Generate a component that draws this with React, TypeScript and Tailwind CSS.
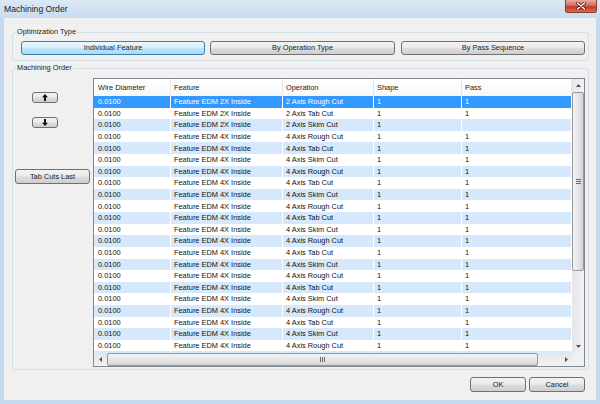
const btn =
  "flex items-center justify-center rounded-[3px] border border-[#707070] bg-[linear-gradient(#f2f2f2,#ebebeb_45%,#dddddd_55%,#cfcfcf)] text-[#1b1b1b] leading-none";
const btnHot =
  "flex items-center justify-center rounded-[3px] border border-[#3c7fb1] bg-[linear-gradient(#eaf6fd,#d9f0fc_45%,#bee6fd_55%,#a7d9f5)] text-[#1b1b1b] leading-none";

const cols = [
  { title: 'Wire Diameter', cls: 'w-[77px] pl-[4px]' },
  { title: 'Feature', cls: 'w-[112px] pl-[3px]' },
  { title: 'Operation', cls: 'w-[91px] pl-[3px]' },
  { title: 'Shape', cls: 'w-[88px] pl-[3px]' },
  { title: 'Pass', cls: 'flex-1 pl-[3px]' },
];

const ops = ['4 Axis Rough Cut', '4 Axis Tab Cut', '4 Axis Skim Cut'];

const rows: string[][] = [
  ['0.0100', 'Feature EDM 2X Inside', '2 Axis Rough Cut', '1', '1'],
  ['0.0100', 'Feature EDM 2X Inside', '2 Axis Tab Cut', '1', '1'],
  ['0.0100', 'Feature EDM 2X Inside', '2 Axis Skim Cut', '1', ''],
  ...Array.from({ length: 20 }, (_, i) => ['0.0100', 'Feature EDM 4X Inside', ops[i % 3], '1', '1']),
];

function Arrow({ down }: { down?: boolean }) {
  return (
    <svg width="6" height="7" viewBox="0 0 6 7" className={down ? 'rotate-180' : ''}>
      <path d="M3 0 L6 3.2 H4 V7 H2 V3.2 H0 Z" fill="#111" />
    </svg>
  );
}

function Tri({ dir }: { dir: 'up' | 'down' | 'left' | 'right' }) {
  const d = {
    up: 'M0 3 L2.5 0 L5 3 Z',
    down: 'M0 0 L5 0 L2.5 3 Z',
    left: 'M3 0 L3 5 L0 2.5 Z',
    right: 'M0 0 L3 2.5 L0 5 Z',
  }[dir];
  const vert = dir === 'up' || dir === 'down';
  return (
    <svg width={vert ? 5 : 3} height={vert ? 3 : 5} viewBox={vert ? '0 0 5 3' : '0 0 3 5'}>
      <path d={d} fill="#505050" />
    </svg>
  );
}

function GroupLabel({ text }: { text: string }) {
  return (
    <span className="absolute -top-[6px] left-[3px] bg-[#f0f0f0] px-[1px] leading-[9px] text-[#1b1b1b]">
      {text}
    </span>
  );
}

export default function App() {
  return (
    <div className="flex h-[404px] w-[600px] flex-col overflow-hidden bg-[#c6daef] font-['Liberation_Sans',Arial,sans-serif] text-[7.4px] text-[#111]">
      {/* Title bar */}
      <div className="flex h-[18px] items-start bg-linear-to-b from-[#dce8f5] to-[#c9dcf0]">
        <span className="pl-[4px] pt-[3px] text-[8.6px] leading-[12px] text-[#1a1a1a]">Machining Order</span>
        <div className="ml-auto mr-[3px] flex h-[13px] w-[32px] items-center justify-center rounded-b-[3px] border border-t-0 border-[#8a3b32] bg-[linear-gradient(#e9a99f,#d4705f_45%,#c23b26_55%,#d96b4f)]">
          <svg width="10" height="8" viewBox="0 0 10 8">
            <path d="M1.5 1 L8.5 7 M8.5 1 L1.5 7" stroke="#5a1d16" strokeWidth="3" strokeLinecap="round" />
            <path d="M1.5 1 L8.5 7 M8.5 1 L1.5 7" stroke="#fff" strokeWidth="1.6" strokeLinecap="round" />
          </svg>
        </div>
      </div>

      {/* Client area */}
      <div className="ml-[4px] flex h-[382px] w-[592px] flex-col bg-[#f0f0f0]">
        {/* Optimization Type */}
        <div className="relative ml-[8px] mt-[14px] flex h-[29px] w-[577px] items-start rounded-[3px] border border-[#d5dfe5] pl-[8px] pt-[8px]">
          <GroupLabel text="Optimization Type" />
          <div className={`${btnHot} h-[14px] w-[184px]`}>Individual Feature</div>
          <div className={`${btn} ml-[5px] h-[14px] w-[185px]`}>By Operation Type</div>
          <div className={`${btn} ml-[6px] h-[14px] w-[184px]`}>By Pass Sequence</div>
        </div>

        {/* Machining Order */}
        <div className="relative ml-[8px] mt-[7px] flex h-[302px] w-[577px] items-start rounded-[3px] border border-[#d5dfe5] pt-[9px]">
          <GroupLabel text="Machining Order" />

          <div className="flex w-[80px] flex-col items-start">
            <div className={`${btn} ml-[19px] mt-[14px] h-[11px] w-[26px]`}>
              <Arrow />
            </div>
            <div className={`${btn} ml-[19px] mt-[14px] h-[11px] w-[26px]`}>
              <Arrow down />
            </div>
            <div className={`${btn} ml-[2px] mt-[41px] h-[15px] w-[75px]`}>Tab Cuts Last</div>
          </div>

          {/* List view */}
          <div className="flex h-[289px] w-[492px] flex-col border border-[#828790] bg-white">
            <div className="flex h-[274px]">
              <div className="w-[478px] overflow-hidden">
                <div className="flex h-[17px] bg-linear-to-b from-white to-[#f6f7f8]">
                  {cols.map((c) => (
                    <div key={c.title} className={`${c.cls} flex items-center border-r border-[#e5e5e5] text-[#222]`}>
                      {c.title}
                    </div>
                  ))}
                </div>
                {rows.map((r, i) => {
                  const bg = i === 0 ? 'bg-[#3399ff] text-white' : i % 2 === 0 ? 'bg-[#d6e8fb]' : 'bg-white';
                  return (
                    <div key={i} className={`flex h-[11.62px] ${bg}`}>
                      {r.map((v, j) => (
                        <div
                          key={j}
                          className={`${cols[j].cls} flex items-center overflow-hidden whitespace-nowrap border-r border-white leading-none`}
                        >
                          {v}
                        </div>
                      ))}
                    </div>
                  );
                })}
              </div>

              {/* Vertical scrollbar */}
              <div className="flex w-[12px] flex-col bg-linear-to-r from-[#e6e6e6] to-[#f3f3f3]">
                <div className="flex h-[13px] items-center justify-center">
                  <Tri dir="up" />
                </div>
                <div className="flex h-[179px] flex-col items-center justify-center rounded-[2px] border border-[#979797] bg-linear-to-r from-[#f4f4f4] via-[#e6e6e6] to-[#d4d4d4]">
                  <div className="flex flex-col gap-[1px]">
                    <div className="h-px w-[5px] bg-[#6b6b6b]" />
                    <div className="h-px w-[5px] bg-[#6b6b6b]" />
                    <div className="h-px w-[5px] bg-[#6b6b6b]" />
                  </div>
                </div>
                <div className="flex-1" />
                <div className="flex h-[13px] items-center justify-center">
                  <Tri dir="down" />
                </div>
              </div>
            </div>

            {/* Horizontal scrollbar */}
            <div className="flex h-[13px]">
              <div className="flex w-[478px] items-stretch bg-linear-to-b from-[#e6e6e6] to-[#f3f3f3]">
                <div className="flex w-[12px] items-center justify-center">
                  <Tri dir="left" />
                </div>
                <div className="ml-[1px] flex w-[431px] items-center justify-center rounded-[2px] border border-[#979797] bg-linear-to-b from-[#f4f4f4] via-[#e6e6e6] to-[#d4d4d4]">
                  <div className="flex gap-[1px]">
                    <div className="h-[5px] w-px bg-[#6b6b6b]" />
                    <div className="h-[5px] w-px bg-[#6b6b6b]" />
                    <div className="h-[5px] w-px bg-[#6b6b6b]" />
                  </div>
                </div>
                <div className="flex-1" />
                <div className="flex w-[12px] items-center justify-center">
                  <Tri dir="right" />
                </div>
              </div>
              <div className="w-[12px] bg-[#f0f0f0]" />
            </div>
          </div>
        </div>

        {/* Dialog buttons */}
        <div className="ml-[466px] mt-[7px] flex">
          <div className={`${btn} h-[15px] w-[56px]`}>OK</div>
          <div className={`${btn} ml-[3px] h-[15px] w-[56px]`}>Cancel</div>
        </div>
      </div>
    </div>
  );
}
